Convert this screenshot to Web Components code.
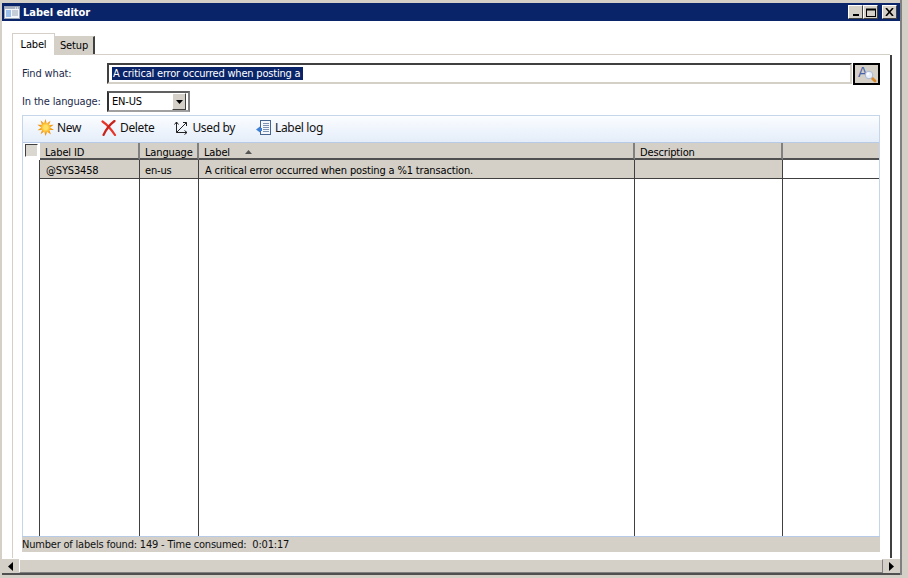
<!DOCTYPE html>
<html>
<head>
<meta charset="utf-8">
<style>
html, body { margin: 0; padding: 0; height: 100%; overflow: hidden; }
body { font: 11px "DejaVu Sans Condensed", "DejaVu Sans", sans-serif; color: #000; letter-spacing: -0.15px; }
</style>
</head>
<body>
<label-window title="Label editor">
    <tab-strip slot="tabs"></tab-strip>
    <find-form></find-form>
    <label-panel></label-panel>
</label-window>

<script>
(function () {
    const ICONS = {
        sun: `<svg width="17" height="17" viewBox="0 0 17 17"><defs><radialGradient id="s"><stop offset=".25" stop-color="#ffe060"/><stop offset=".7" stop-color="#f59a10"/><stop offset="1" stop-color="#ee8a0c"/></radialGradient></defs><path d="M8.5 0l1.3 4.4L13.5 1.8l-1.5 4.1 4.6-.1-3.5 2.7 3.9 2.4-4.5.2 1.3 4.4-3.5-2.8-1.8 4.3-1.3-4.4-3.6 2.7 1.4-4.3-4.4.2 3.6-2.8L.4 5.8l4.5-.1L3.6 1.4l3.5 2.8z" fill="url(#s)"/></svg>`,
        cross: `<svg width="16" height="16" viewBox="0 0 16 16"><path d="M1.5 1.5C6 4.5 10 9 14 15" fill="none" stroke="#e8352a" stroke-width="2.2" stroke-linecap="round"/><path d="M13.5 1C9.5 4 5 9.5 2.5 15" fill="none" stroke="#c9241c" stroke-width="2.2" stroke-linecap="round"/></svg>`,
        used: `<svg width="15" height="15" viewBox="0 0 15 15" fill="none" stroke="#222" stroke-width="1"><path d="M2.5 2v10.5H13M2.5 12.5L12.5 2.5M.5 4.5l2-2.5 2 2.5M10.5 10.5l2.5 2-2.5 2M9 2.5h3.5V6"/></svg>`,
        log: `<svg width="17" height="17" viewBox="0 0 17 17"><rect x="5.5" y="1.5" width="10" height="14" fill="#f4f7fb" stroke="#47668f"/><path d="M8 4.5h6M8 6.5h6M8 8.5h6M8 10.5h6M8 12.5h6" stroke="#7c93b2"/><path d="M1 10.5L5 7.5v1.5h2v3H5v1.5z" fill="#3f7fd6"/></svg>`,
        find: `<svg width="20" height="18" viewBox="0 0 20 18"><text x="1" y="12" font-family="DejaVu Sans" font-size="14" fill="#4a62a8">A</text><path d="M14.5 12.5l3.5 3.5" stroke="#d9892b" stroke-width="2.8" stroke-linecap="round"/><circle cx="12" cy="10" r="3.8" fill="#e6eefc" stroke="#a9b8d2"/><circle cx="11" cy="9" r="1.5" fill="#fff"/></svg>`
    };

    class LabelWindow extends HTMLElement {
        constructor() {
            super();
            this.attachShadow({ mode: "open" });
            this.shadowRoot.innerHTML = `
            <style>
            :host {
                background: #d4d0c8;
                box-sizing: border-box;
                display: flex;
                height: 578px;
                padding: 0 6px 3px 2px;
                width: 908px;
            }
            .frame {
                border-right: 2px solid #808080;
                display: flex;
                flex: 1;
                flex-direction: column;
                min-width: 0;
                padding-top: 3px;
            }
            .title {
                align-items: center;
                background: #0a246a;
                color: #fff;
                display: flex;
                flex: none;
                font: bold 11px "DejaVu Sans Condensed", "DejaVu Sans", sans-serif;
                gap: 3px;
                height: 18px;
                letter-spacing: 0;
                padding: 0 3px 0 2px;
            }
            .title span { flex: 1; }
            .title svg { flex: none; }
            .buttons { display: flex; flex: none; }
            .caption-btn {
                align-items: center;
                background: #d4d0c8;
                border: 1px solid;
                border-color: #fff #404040 #404040 #fff;
                box-sizing: border-box;
                display: flex;
                height: 14px;
                justify-content: center;
                width: 15px;
            }
            .caption-btn.last { margin-left: 4px; }
            .body {
                background: #fff;
                border-bottom: 2px solid #505050;
                display: flex;
                flex: 1;
                flex-direction: column;
                min-height: 0;
            }
            .content { display: flex; flex: 1; flex-direction: column; min-height: 0; }
            .hscroll {
                background: #d4d0c8;
                border-top: 1px solid #fff;
                display: flex;
                flex: none;
                height: 14px;
                padding: 0 1px;
            }
            .track {
                background: #d4d0c8;
                border: 1px solid;
                border-color: #fff #808080 #808080 #fff;
                box-sizing: border-box;
                flex: 1;
                margin: 0 1px;
            }
            .arrow {
                align-items: center;
                background: #d4d0c8;
                box-sizing: border-box;
                display: flex;
                flex: none;
                justify-content: center;
                width: 15px;
            }
            </style>
            <div class="frame">
                <div class="title">
                    <svg width="16" height="13" viewBox="0 0 16 13"><rect x=".5" y=".5" width="15" height="12" fill="#f4f6fa" stroke="#9aa4b4"/><rect x="1" y="1" width="14" height="2" fill="#a8b2c2"/><path d="M11 2h1M13 2h1" stroke="#fff"/><rect x="2" y="4" width="5" height="7" fill="#9cc0ea"/><path d="M8 5h6M8 7h6M8 9h6" stroke="#9aa4b4"/></svg>
                    <span>${this.getAttribute("title")}</span>
                    <div class="buttons">
                        <div class="caption-btn"><svg width="8" height="8"><rect x="1" y="6" width="6" height="2" fill="#000"/></svg></div>
                        <div class="caption-btn"><svg width="10" height="9"><rect x=".5" y="1" width="9" height="7.5" fill="none" stroke="#000"/><rect y="1" width="10" height="1.5" fill="#000"/></svg></div>
                        <div class="caption-btn last"><svg width="9" height="8"><path d="M1 0l7 8M8 0l-7 8" stroke="#000" stroke-width="1.6"/></svg></div>
                    </div>
                </div>
                <div class="body">
                    <div class="content"><slot name="tabs"></slot><slot></slot></div>
                    <div class="hscroll">
                        <div class="arrow"><svg width="5" height="9"><path d="M5 0v9L0 4.5z"/></svg></div>
                        <div class="track"></div>
                        <div class="arrow"><svg width="5" height="9"><path d="M0 0v9l5-4.5z"/></svg></div>
                    </div>
                </div>
            </div>
            `;
        }
    }

    class TabStrip extends HTMLElement {
        constructor() {
            super();
            this.attachShadow({ mode: "open" });
            this.shadowRoot.innerHTML = `
            <style>
            :host {
                align-items: flex-end;
                border-bottom: 1px solid #d4d0c8;
                box-sizing: border-box;
                display: flex;
                flex: none;
                height: 34px;
                margin: 0 10px 0 10px;
            }
            .tab { box-sizing: border-box; text-align: center; }
            .on {
                background: #fff;
                border: 1px solid #d4d0c8;
                border-bottom: 0;
                height: 22px;
                line-height: 21px;
                margin-bottom: -1px;
                position: relative;
                width: 43px;
            }
            .off {
                background: #d4d0c8;
                border-right: 2px solid #404040;
                border-top: 1px solid #d4d0c8;
                height: 18px;
                line-height: 17px;
                width: 40px;
            }
            </style>
            <div class="tab on">Label</div>
            <div class="tab off">Setup</div>
            `;
        }
    }

    class FindForm extends HTMLElement {
        constructor() {
            super();
            this.attachShadow({ mode: "open" });
            this.shadowRoot.innerHTML = `
            <style>
            :host {
                align-items: center;
                border-left: 1px solid #d4d0c8;
                border-right: 2px solid #404040;
                box-sizing: border-box;
                color: #1c2a4a;
                display: grid;
                flex: none;
                grid-template-columns: 85px 1fr 28px;
                grid-template-rows: 21px 21px;
                height: 60px;
                margin: 0 8px 0 10px;
                padding: 8px 10px 0 9px;
                row-gap: 7px;
            }
            .field {
                align-items: center;
                border: 2px solid;
                border-color: #404040 #d4d0c8 #d4d0c8 #404040;
                box-sizing: border-box;
                color: #000;
                display: flex;
                height: 21px;
                letter-spacing: -0.2px;
                padding-left: 3px;
            }
            .sel { background: #0a246a; color: #fff; line-height: 13px; padding: 0 0 0 1px; }
            .find {
                align-items: center;
                background: #d4d0c8;
                border: 2px solid #000;
                box-sizing: border-box;
                display: flex;
                height: 22px;
                justify-content: center;
                margin-left: 1px;
                width: 27px;
            }
            .combo {
                border: 2px solid;
                border-color: #606060 #808080 #a0a0a0 #303030;
                box-sizing: border-box;
                color: #000;
                display: flex;
                height: 21px;
                justify-content: space-between;
                line-height: 17px;
                padding-left: 3px;
                width: 83px;
            }
            .drop {
                align-items: center;
                background: #d4d0c8;
                border: 1px solid;
                border-color: #fff #404040 #404040 #fff;
                box-sizing: border-box;
                display: flex;
                justify-content: center;
                margin-right: 2px;
                width: 14px;
            }
            </style>
            <div>Find what:</div>
            <div class="field"><span class="sel">A critical error occurred when posting a&nbsp;</span></div>
            <div class="find">${ICONS.find}</div>
            <div>In the language:</div>
            <div class="combo">EN-US<div class="drop"><svg width="7" height="4"><path d="M0 0h7L3.5 4z"/></svg></div></div>
            `;
        }
    }

    class ToolButton extends HTMLElement {
        constructor() {
            super();
            this.attachShadow({ mode: "open" });
            this.shadowRoot.innerHTML = `
            <style>
            :host { align-items: center; color: #111; display: flex; gap: 3px; letter-spacing: -0.35px; }
            svg { display: block; }
            </style>
            ${ICONS[this.getAttribute("icon")]}<slot></slot>
            `;
        }
    }

    class LabelPanel extends HTMLElement {
        constructor() {
            super();
            this.attachShadow({ mode: "open" });
            this.shadowRoot.innerHTML = `
            <style>
            :host {
                border-left: 1px solid #d4d0c8;
                border-right: 2px solid #404040;
                box-sizing: border-box;
                display: flex;
                flex: 1;
                flex-direction: column;
                margin: 0 8px 0 10px;
                min-height: 0;
                padding: 0 10px 6px 9px;
            }
            .panel { border: 1px solid #c5d5ea; border-bottom: 0; display: flex; flex: 1; flex-direction: column; min-height: 0; }
            .bar {
                align-items: center;
                background: linear-gradient(#fbfdff, #e4edf9);
                border-bottom: 1px solid #b8cbe6;
                box-sizing: border-box;
                display: flex;
                flex: none;
                font: 12px "Noto Sans", sans-serif;
                gap: 20px;
                height: 27px;
                padding: 0 0 3px 14px;
            }
            .grid {
                display: grid;
                flex: 1;
                grid-template-columns: 17px 100px 59px 436px 148px 1fr;
                grid-template-rows: 17px 19px 1fr;
                min-height: 0;
            }
            .h {
                background: #d4d0c8;
                border-bottom: 2px solid #505050;
                border-right: 2px solid #808080;
                box-sizing: border-box;
                line-height: 20px;
                padding-left: 5px;
                white-space: nowrap;
            }
            .h.last { border-right: 0; }
            .corner { background: #fff; padding: 1px 0 0 2px; }
            .check { background: #dad7d0; border: 1px solid; border-color: #404040 #fff #fff #404040; box-sizing: border-box; height: 13px; width: 13px; }
            .c {
                background: #d4d0c8;
                border-bottom: 1px solid #404040;
                border-right: 1px solid #404040;
                box-sizing: border-box;
                line-height: 21px;
                padding-left: 5px;
                white-space: nowrap;
            }
            .c.first { border-left: 1px solid #404040; margin-left: -1px; padding-left: 6px; }
            .c.text { padding-left: 6px; }
            .c.white { background: #fff; border-right: 0; }
            .blank { background: #fff; border-right: 1px solid #404040; box-sizing: border-box; }
            .blank.first { border-left: 1px solid #404040; margin-left: -1px; }
            .blank.white { border-right: 0; }
            .arrow { margin-left: 15px; vertical-align: 2px; }
            .status {
                background: #d4d0c8;
                border-top: 1px solid #b8cbe6;
                color: #111;
                flex: none;
                height: 15px;
                letter-spacing: -0.2px;
                line-height: 15px;
            }
            </style>
            <div class="panel">
                <div class="bar">
                    <tool-button icon="sun">New</tool-button>
                    <tool-button icon="cross">Delete</tool-button>
                    <tool-button icon="used">Used by</tool-button>
                    <tool-button icon="log">Label log</tool-button>
                </div>
                <div class="grid">
                    <div class="corner"><div class="check"></div></div>
                    <div class="h">Label ID</div>
                    <div class="h">Language</div>
                    <div class="h">Label<svg class="arrow" width="7" height="4"><path d="M0 4h7L3.5 0z" fill="#555"/></svg></div>
                    <div class="h">Description</div>
                    <div class="h last"></div>
                    <div></div>
                    <div class="c first">@SYS3458</div>
                    <div class="c">en-us</div>
                    <div class="c text">A critical error occurred when posting a %1 transaction.</div>
                    <div class="c"></div>
                    <div class="c white"></div>
                    <div></div>
                    <div class="blank first"></div>
                    <div class="blank"></div>
                    <div class="blank"></div>
                    <div class="blank"></div>
                    <div class="blank white"></div>
                </div>
            </div>
            <div class="status">Number of labels found: 149 - Time consumed:&nbsp; 0:01:17</div>
            `;
        }
    }

    customElements.define("tool-button", ToolButton);
    customElements.define("label-panel", LabelPanel);
    customElements.define("find-form", FindForm);
    customElements.define("tab-strip", TabStrip);
    customElements.define("label-window", LabelWindow);
})();
</script>
</body>
</html>
